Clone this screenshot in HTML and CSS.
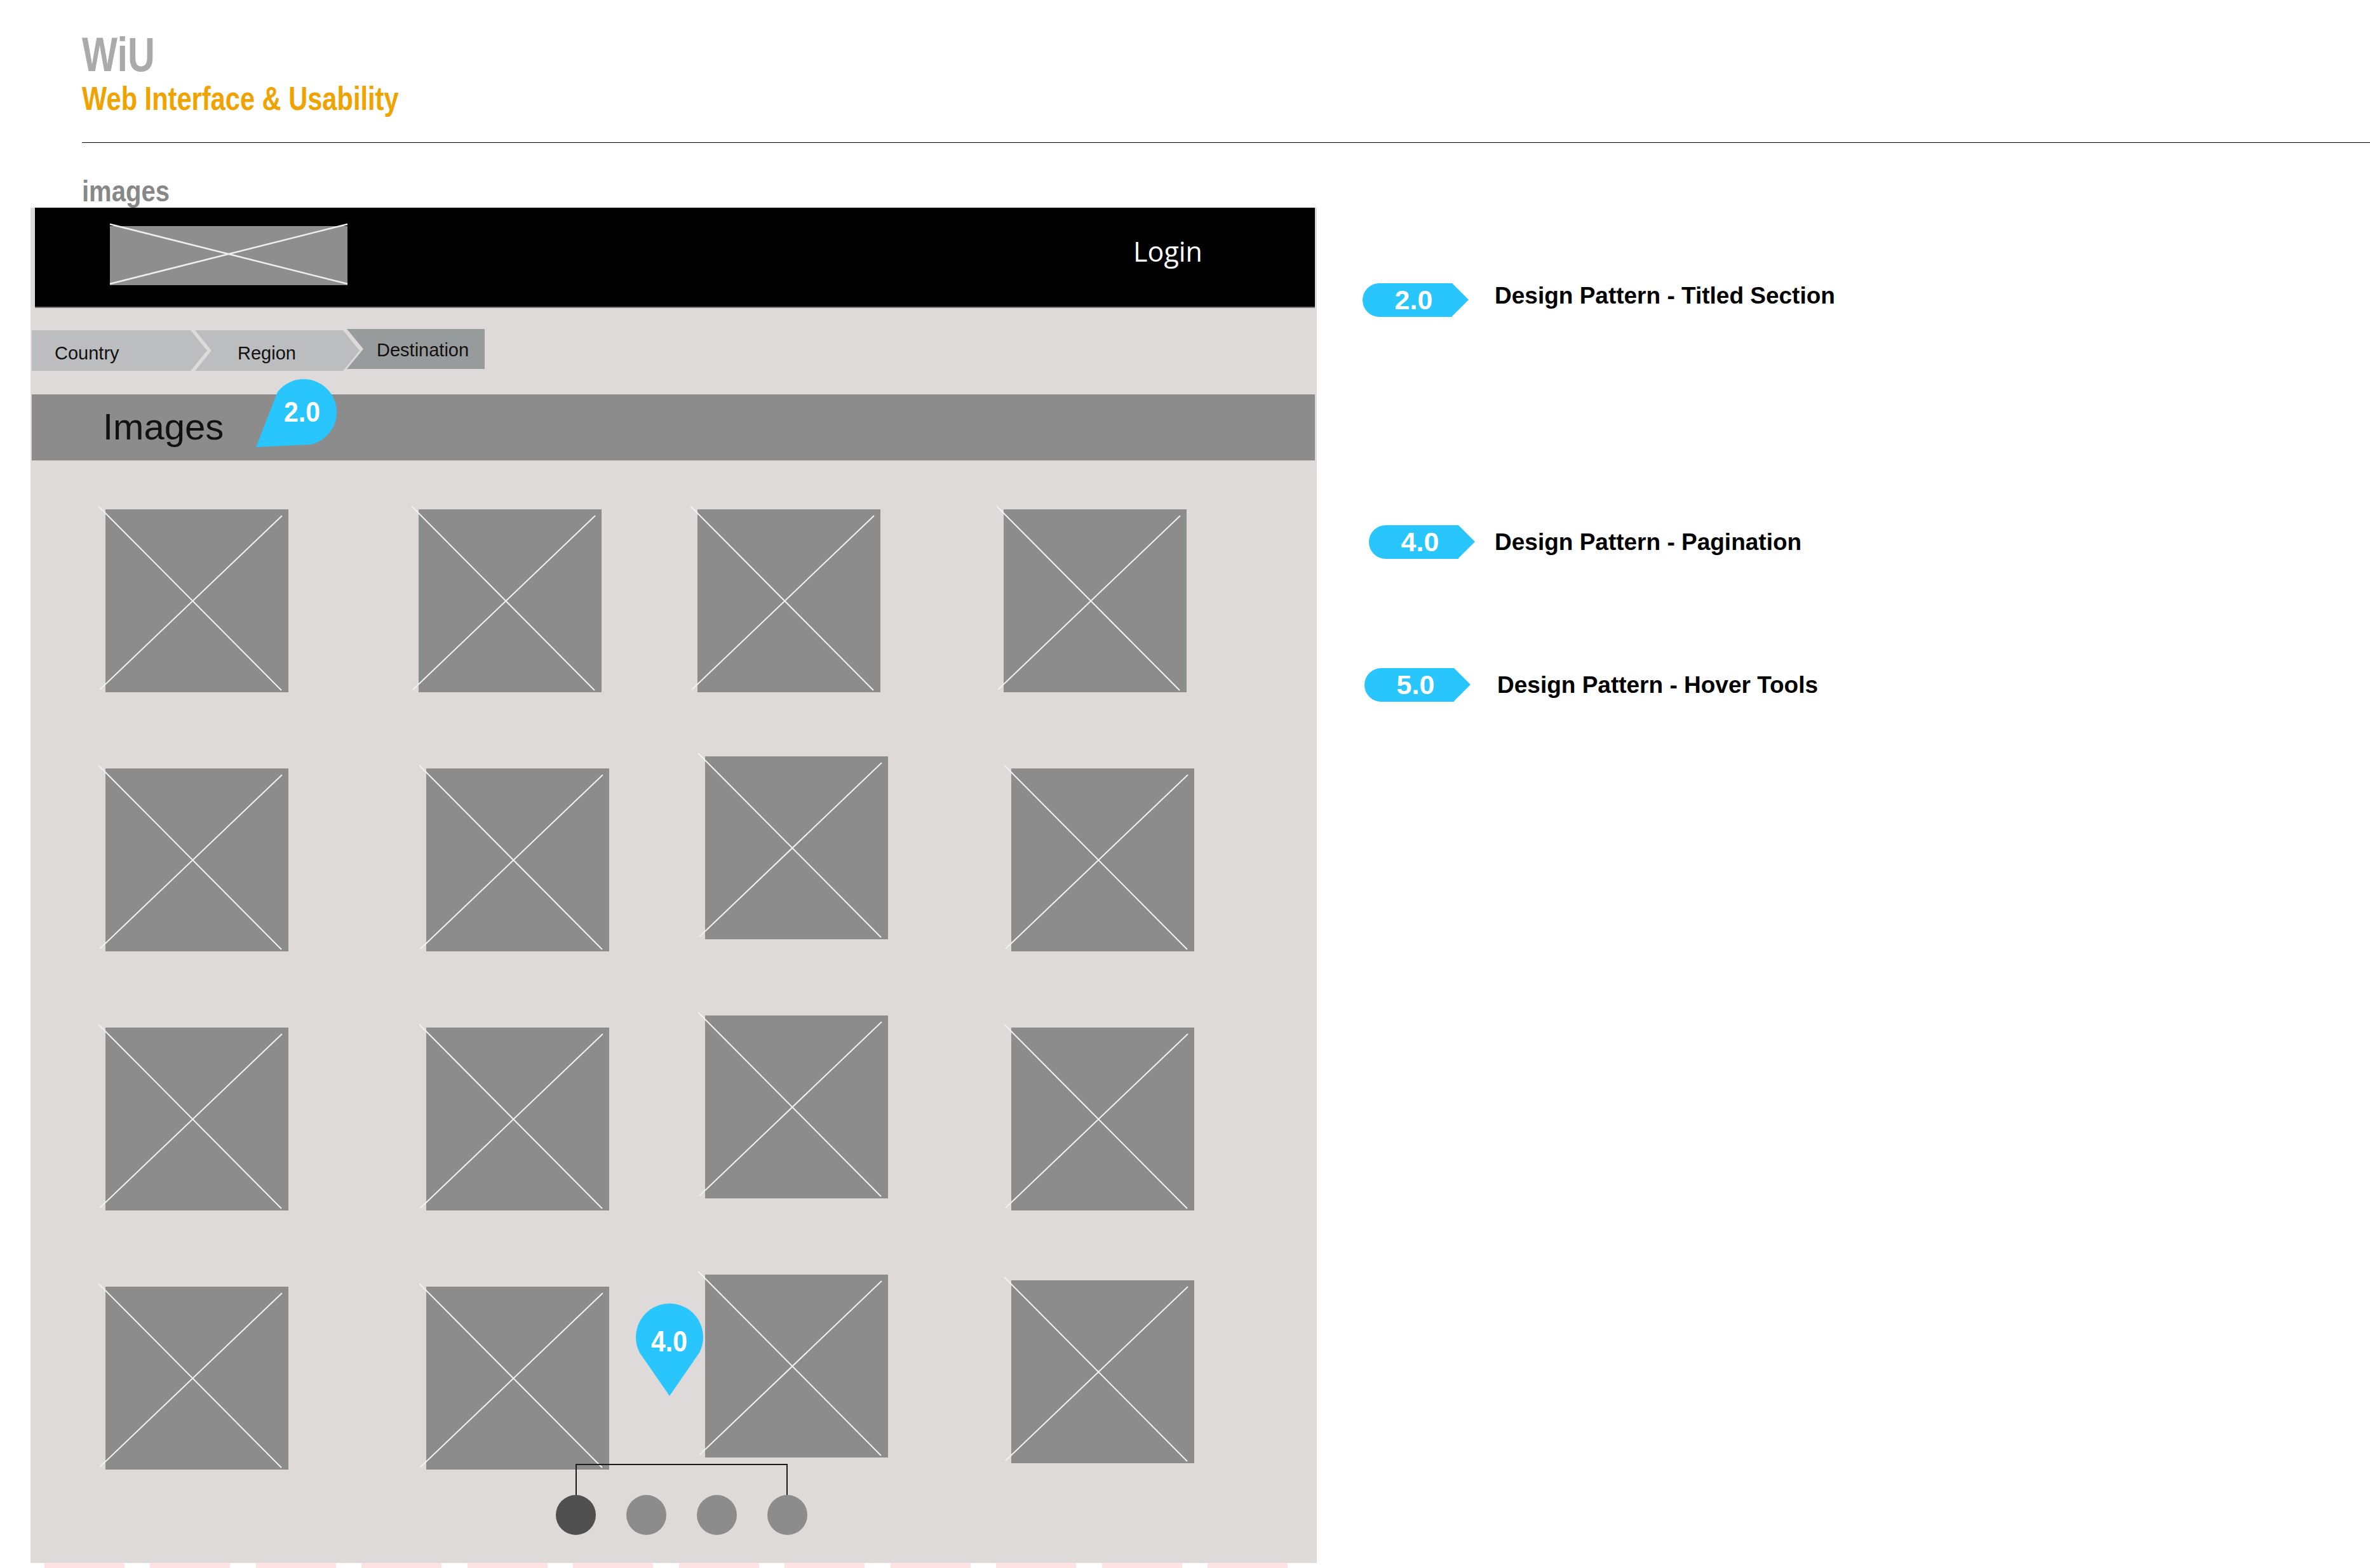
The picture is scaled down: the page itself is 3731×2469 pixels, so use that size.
FILE: index.html
```html
<!DOCTYPE html>
<html lang="en">
<head>
    <meta charset="UTF-8">
    <meta name="viewport" content="width=device-width, initial-scale=1.0">
    <title>WiU - images</title>
    <link rel="stylesheet" href="styles.css">
</head>
<body>
    <header class="page-head">
        <div class="brand">WiU</div>
        <div class="brand-sub">Web Interface &amp; Usability</div>
    </header>
    <hr class="rule">
    <div class="page-label">images</div>

    <main class="board">
        <div class="board-left">
            <div class="frame">
                <div class="site-header">
                    <svg class="logo-box" viewBox="0 0 374 93">
                        <rect width="374" height="93" fill="#8e8e8e"/>
                        <path d="M0 -3L374 91M0 91L374 -3" stroke="#eeeeee" stroke-width="2.5"/>
                    </svg>
                    <span class="login">Login</span>
                </div>

                <nav class="crumbs">
                    <div class="crumb crumb-first">Country</div>
                    <div class="crumb crumb-mid">Region</div>
                    <div class="crumb crumb-last">Destination</div>
                </nav>

                <div class="title-bar">
                    <h1>Images</h1>
                    <svg class="pin pin-title" viewBox="398 592 138 116">
                        <path d="M403 704L437 617A52 52 0 1 1 488 700Z" fill="#29c6fd"/>
                        <text x="475.5" y="664" font-size="44" textLength="57" lengthAdjust="spacingAndGlyphs" text-anchor="middle">2.0</text>
                    </svg>
                </div>

                <div class="grid">
                    <svg class="tile" viewBox="0 0 288 288"><rect width="288" height="288" fill="#8c8c8c"/><path d="M-11 -5L277 285M-9 284L278 10" stroke="#f2f2f2" stroke-width="2"/></svg>
                    <svg class="tile nudge-left" viewBox="0 0 288 288"><rect width="288" height="288" fill="#8c8c8c"/><path d="M-11 -5L277 285M-9 284L278 10" stroke="#f2f2f2" stroke-width="2"/></svg>
                    <svg class="tile nudge-left" viewBox="0 0 288 288"><rect width="288" height="288" fill="#8c8c8c"/><path d="M-11 -5L277 285M-9 284L278 10" stroke="#f2f2f2" stroke-width="2"/></svg>
                    <svg class="tile nudge-left" viewBox="0 0 288 288"><rect width="288" height="288" fill="#8c8c8c"/><path d="M-11 -5L277 285M-9 284L278 10" stroke="#f2f2f2" stroke-width="2"/></svg>

                    <svg class="tile" viewBox="0 0 288 288"><rect width="288" height="288" fill="#8c8c8c"/><path d="M-11 -5L277 285M-9 284L278 10" stroke="#f2f2f2" stroke-width="2"/></svg>
                    <svg class="tile" viewBox="0 0 288 288"><rect width="288" height="288" fill="#8c8c8c"/><path d="M-11 -5L277 285M-9 284L278 10" stroke="#f2f2f2" stroke-width="2"/></svg>
                    <svg class="tile raised" viewBox="0 0 288 288"><rect width="288" height="288" fill="#8c8c8c"/><path d="M-11 -5L277 285M-9 284L278 10" stroke="#f2f2f2" stroke-width="2"/></svg>
                    <svg class="tile" viewBox="0 0 288 288"><rect width="288" height="288" fill="#8c8c8c"/><path d="M-11 -5L277 285M-9 284L278 10" stroke="#f2f2f2" stroke-width="2"/></svg>

                    <svg class="tile" viewBox="0 0 288 288"><rect width="288" height="288" fill="#8c8c8c"/><path d="M-11 -5L277 285M-9 284L278 10" stroke="#f2f2f2" stroke-width="2"/></svg>
                    <svg class="tile" viewBox="0 0 288 288"><rect width="288" height="288" fill="#8c8c8c"/><path d="M-11 -5L277 285M-9 284L278 10" stroke="#f2f2f2" stroke-width="2"/></svg>
                    <svg class="tile raised" viewBox="0 0 288 288"><rect width="288" height="288" fill="#8c8c8c"/><path d="M-11 -5L277 285M-9 284L278 10" stroke="#f2f2f2" stroke-width="2"/></svg>
                    <svg class="tile" viewBox="0 0 288 288"><rect width="288" height="288" fill="#8c8c8c"/><path d="M-11 -5L277 285M-9 284L278 10" stroke="#f2f2f2" stroke-width="2"/></svg>

                    <svg class="tile" viewBox="0 0 288 288"><rect width="288" height="288" fill="#8c8c8c"/><path d="M-11 -5L277 285M-9 284L278 10" stroke="#f2f2f2" stroke-width="2"/></svg>
                    <svg class="tile" viewBox="0 0 288 288"><rect width="288" height="288" fill="#8c8c8c"/><path d="M-11 -5L277 285M-9 284L278 10" stroke="#f2f2f2" stroke-width="2"/></svg>
                    <svg class="tile raised" viewBox="0 0 288 288"><rect width="288" height="288" fill="#8c8c8c"/><path d="M-11 -5L277 285M-9 284L278 10" stroke="#f2f2f2" stroke-width="2"/></svg>
                    <svg class="tile lift" viewBox="0 0 288 288"><rect width="288" height="288" fill="#8c8c8c"/><path d="M-11 -5L277 285M-9 284L278 10" stroke="#f2f2f2" stroke-width="2"/></svg>

                    <svg class="pin pin-pages" viewBox="995 2045 120 160">
                        <path d="M1007 2130A53 53 0 1 1 1101 2130L1054 2198Z" fill="#29c6fd"/>
                        <text x="1053.5" y="2128" font-size="47" textLength="57" lengthAdjust="spacingAndGlyphs" text-anchor="middle">4.0</text>
                    </svg>
                </div>

                <div class="pager">
                    <div class="pager-bracket"></div>
                    <div class="dots">
                        <span class="dot active"></span>
                        <span class="dot"></span>
                        <span class="dot"></span>
                        <span class="dot"></span>
                    </div>
                </div>
            </div>
            <div class="frame-foot"></div>
        </div>

        <aside class="legend">
            <div class="legend-item legend-first">
                <div class="badge">2.0</div>
                <div class="legend-text">Design Pattern - Titled Section</div>
            </div>
            <div class="legend-item legend-second">
                <div class="badge">4.0</div>
                <div class="legend-text">Design Pattern - Pagination</div>
            </div>
            <div class="legend-item legend-third">
                <div class="badge">5.0</div>
                <div class="legend-text">Design Pattern - Hover Tools</div>
            </div>
        </aside>
    </main>
</body>
</html>
```

FILE: styles.css
```css
* {
    box-sizing: border-box;
}

body {
    margin: 0;
    font-family: "Liberation Sans", Arial, sans-serif;
    background-color: #fff;
    color: #000;
}

/* page heading */

.page-head {
    padding-left: 129px;
}

.brand {
    margin-top: 48px;
    font-size: 76px;
    font-weight: bold;
    line-height: 1;
    color: #aaaaaa;
    width: max-content;
    transform: scaleX(0.78);
    transform-origin: left;
}

.brand-sub {
    margin-top: 5px;
    font-size: 52px;
    font-weight: bold;
    line-height: 1;
    color: #efa300;
    width: max-content;
    transform: scaleX(0.8);
    transform-origin: left;
}

.rule {
    margin: 43px 0 0 129px;
    height: 0;
    border: 0;
    border-top: 1px solid #000;
}

.page-label {
    margin: 53px 0 0 129px;
    font-size: 46px;
    font-weight: bold;
    line-height: 1;
    color: #888888;
    width: max-content;
    transform: scaleX(0.87);
    transform-origin: left;
}

.board {
    display: flex;
    align-items: flex-start;
    margin-top: 3px;
}

/* wireframe */

.frame {
    margin-left: 48px;
    width: 2025px;
    background-color: #dddad9;
}

.frame-foot {
    margin-left: 70px;
    width: 1960px;
    height: 8px;
    background: repeating-linear-gradient(90deg, #fde3e3 0 126px, transparent 126px 166.5px);
}

.site-header {
    display: flex;
    justify-content: space-between;
    align-items: flex-start;
    height: 158px;
    margin: 0 3px 0 7px;
    padding: 29px 177px 0 118px;
    background-color: #000;
    border-bottom: 2px solid #7a7a7a;
}

.logo-box {
    display: block;
    width: 374px;
    height: 93px;
    overflow: visible;
}

.login {
    margin-top: 18px;
    font-family: "Open Sans", "Liberation Sans", sans-serif;
    font-size: 43px;
    line-height: 1;
    color: #fff;
}

.crumbs {
    display: flex;
    height: 64px;
    margin: 35px 0 0 2px;
}

.crumb {
    height: 64px;
    font-size: 29px;
    line-height: 1;
    color: #111;
    background-color: #bcbdbf;
    padding-top: 22px;
}

.crumb-first {
    width: 276px;
    padding-left: 36px;
    clip-path: polygon(0 0, 250px 0, 100% 50%, 250px 100%, 0 100%);
}

.crumb-mid {
    width: 259px;
    margin-left: -19px;
    padding-left: 67px;
    clip-path: polygon(0 0, 233px 0, 100% 50%, 233px 100%, 0 100%, 26px 50%);
}

.crumb-last {
    width: 217px;
    height: 63px;
    margin-left: -20px;
    margin-top: -2px;
    padding: 19px 0 0 47px;
    background-color: #989b9c;
    clip-path: polygon(0 0, 100% 0, 100% 100%, 0 100%, 26px 50%);
}

.title-bar {
    position: relative;
    height: 104px;
    margin: 37px 3px 0 2px;
    padding: 22px 0 0 112px;
    background-color: #8c8c8c;
}

.title-bar h1 {
    margin: 0;
    font-size: 58px;
    font-weight: normal;
    line-height: 1;
    color: #111;
}

.pin {
    position: absolute;
    overflow: visible;
}

.pin text {
    font-family: "Liberation Sans", Arial, sans-serif;
    font-weight: bold;
    fill: #fff;
}

.pin-title {
    left: 348px;
    top: -29px;
    width: 138px;
    height: 116px;
}

.pin-pages {
    left: 947px;
    top: 1320px;
    width: 120px;
    height: 160px;
}

.grid {
    position: relative;
    display: grid;
    grid-template-columns: 505px 439px 482px 288px;
    grid-auto-rows: 288px;
    row-gap: 120px;
    padding: 77px 0 0 118px;
}

.tile {
    display: block;
    width: 288px;
    height: 288px;
    overflow: visible;
}

.tile.nudge-left {
    margin-left: -12px;
}

.tile.raised {
    margin-top: -19px;
}

.tile.lift {
    margin-top: -10px;
}

.pager {
    position: relative;
    margin-top: -9px;
    padding: 0 0 44px 827px;
}

.pager-bracket {
    width: 334px;
    height: 49px;
    margin-left: 31px;
    border: 2px solid #1c1c1c;
    border-bottom: 0;
}

.dots {
    display: flex;
    gap: 48px;
}

.dot {
    width: 63px;
    height: 63px;
    border-radius: 50%;
    background-color: #8c8c8c;
}

.dot.active {
    background-color: #505050;
}

/* legend */

.legend {
    display: flex;
    flex-direction: column;
    padding: 119px 0 0 72px;
}

.legend-item {
    display: grid;
    grid-template-columns: 208px auto;
    align-items: center;
}

.legend-second {
    margin-top: 328px;
}

.legend-third {
    margin-top: 172px;
}

.badge {
    position: relative;
    display: flex;
    align-items: center;
    justify-content: center;
    width: 141px;
    height: 53px;
    padding-left: 20px;
    border-radius: 27px 0 0 27px;
    background-color: #29c6fd;
    color: #fff;
    font-size: 43px;
    font-weight: bold;
    line-height: 1;
}

.badge::after {
    content: "";
    position: absolute;
    left: 100%;
    top: 0;
    border-left: 26px solid #29c6fd;
    border-top: 26.5px solid transparent;
    border-bottom: 26.5px solid transparent;
}

.legend-second .badge {
    margin-left: 10px;
}

.legend-third .badge {
    margin-left: 3px;
}

.legend-text {
    font-size: 37px;
    font-weight: bold;
    line-height: 1;
    white-space: nowrap;
}

.legend-first .legend-text {
    margin-top: -14px;
}

.legend-third .legend-text {
    margin-left: 4px;
}
```
